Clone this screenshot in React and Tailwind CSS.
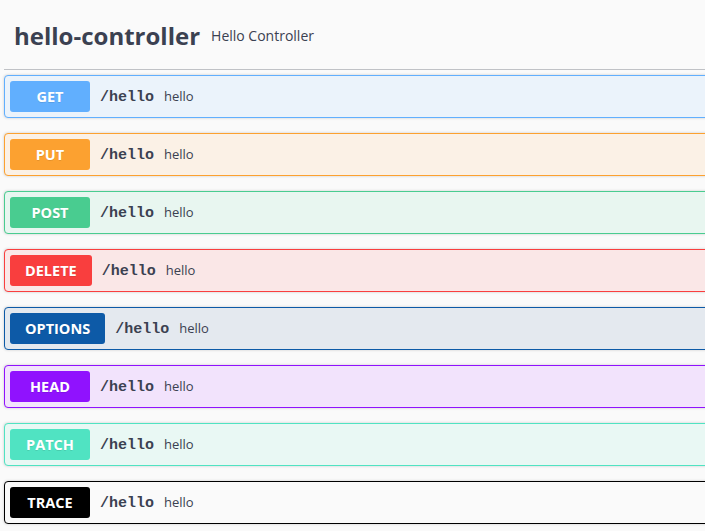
const OPS = [
  { method: "GET", border: "border-[#61affe]", bg: "bg-[#ebf3fb]", badge: "bg-[#61affe]" },
  { method: "PUT", border: "border-[#fca130]", bg: "bg-[#fbf1e6]", badge: "bg-[#fca130]" },
  { method: "POST", border: "border-[#49cc90]", bg: "bg-[#e8f6f0]", badge: "bg-[#49cc90]" },
  { method: "DELETE", border: "border-[#f93e3e]", bg: "bg-[#fae7e7]", badge: "bg-[#f93e3e]" },
  { method: "OPTIONS", border: "border-[#0d5aa7]", bg: "bg-[#e4e9ef]", badge: "bg-[#0d5aa7]" },
  { method: "HEAD", border: "border-[#9012fe]", bg: "bg-[#f2e3fc]", badge: "bg-[#9012fe]" },
  { method: "PATCH", border: "border-[#50e3c2]", bg: "bg-[#e9f8f4]", badge: "bg-[#50e3c2]" },
  { method: "TRACE", border: "border-[#000000]", bg: "bg-[#fafafa]", badge: "bg-[#000000]" },
];

function OpBlock({ op }) {
  return (
    <div
      className={`mb-[15px] flex h-[43px] items-center rounded-[4px] border px-[5px] shadow-[0_0_3px_rgba(0,0,0,0.19)] ${op.border} ${op.bg}`}
    >
      <span
        className={`flex h-[31px] min-w-[80px] items-center justify-center rounded-[3px] px-[15px] text-[14.5px] font-bold text-white [text-shadow:0_1px_0_rgba(0,0,0,0.1)] ${op.badge}`}
      >
        {op.method}
      </span>
      <div className="flex items-baseline pt-[3px]">
        <span className="px-[10px] font-['Liberation_Mono',monospace] text-[15px] font-bold text-[#3b4151]">
          /hello
        </span>
        <span className="text-[13px] text-[#3b4151]">hello</span>
      </div>
    </div>
  );
}

export default function App() {
  return (
    <div className="h-[531px] w-[705px] overflow-hidden bg-[#fafafa] font-['Open_Sans',sans-serif]">
      <div className="w-[800px] px-[4px] pt-[9px]">
        <h3 className="mb-[5px] flex items-center border-b border-[rgba(59,65,81,0.3)] pb-[17px] pl-[10px] pr-[20px] pt-[10px]">
          <span className="text-[24px] font-bold leading-[33px] text-[#3b4151]">hello-controller</span>
          <small className="px-[11px] text-[14px] text-[#3b4151]">Hello Controller</small>
        </h3>
        {OPS.map((op) => (
          <OpBlock key={op.method} op={op} />
        ))}
      </div>
    </div>
  );
}
